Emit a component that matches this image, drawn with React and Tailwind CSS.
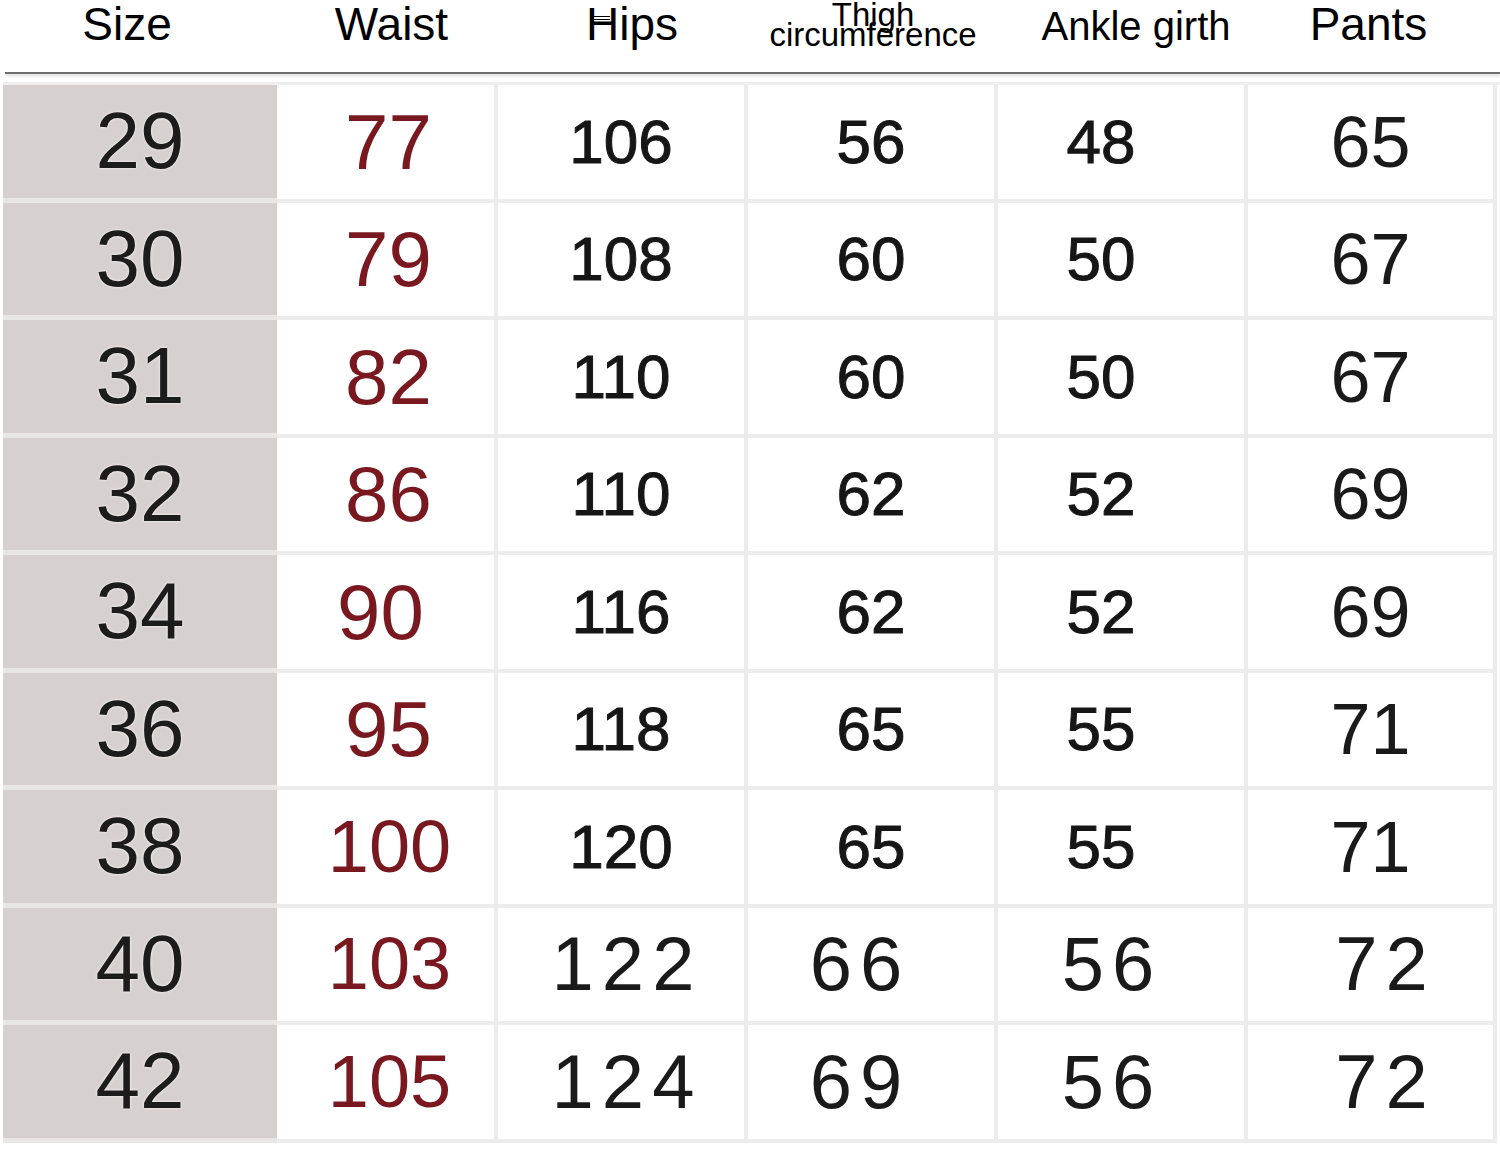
import React from 'react';

const rows = [
  ['29', '77', '106', '56', '48', '65'],
  ['30', '79', '108', '60', '50', '67'],
  ['31', '82', '110', '60', '50', '67'],
  ['32', '86', '110', '62', '52', '69'],
  ['34', '90', '116', '62', '52', '69'],
  ['36', '95', '118', '65', '55', '71'],
  ['38', '100', '120', '65', '55', '71'],
  ['40', '103', '122', '66', '56', '72'],
  ['42', '105', '124', '69', '56', '72'],
];

const cols = 'grid grid-cols-[274px_221px_250px_250px_250px_249px]';

// small measurement cells (rows 1-7, hips / thigh / ankle)
const small = 'text-[62px] text-[#161616] [-webkit-text-stroke:1px_#161616]';
// the last two rows are set larger and spaced out
const big = 'text-[76px] text-[#1a1a1a] tracking-[8px]';

function Cell({ children, className = '' }) {
  return (
    <div
      className={`flex items-center justify-center border-r-[4px] border-b-[4px] border-[#ececec] bg-white leading-none ${className}`}
    >
      {children}
    </div>
  );
}

export default function App() {
  return (
    <div className="w-[1500px] h-[1150px] bg-white font-['Liberation_Sans',Arial,sans-serif] text-black overflow-hidden">
      {/* header */}
      <div className={`${cols} ml-[3px] h-[72px]`}>
        <div className="flex justify-center pt-[1px] pr-[26px] text-[46px] leading-none">Size</div>
        <div className="flex justify-center pt-[1px] pl-[8px] text-[46px] leading-none">Waist</div>
        <div className="relative flex justify-center pt-[1px] pl-[18px] text-[46px] leading-none">
          <span className="relative">
            Hips
            <span className="absolute left-[6px] top-[15px] flex w-[18px] flex-col gap-[2px]">
              <span className="h-px bg-black" />
              <span className="h-px bg-black" />
              <span className="h-px bg-black" />
            </span>
          </span>
        </div>
        <div className="flex flex-col items-center pt-[5px] text-[33px] leading-[20px]">
          <span>Thigh</span>
          <span>circumference</span>
        </div>
        <div className="flex justify-center pt-[6px] pl-[26px] text-[40px] leading-none">Ankle girth</div>
        <div className="flex justify-center pt-[1px] pr-[8px] text-[46px] leading-none">Pants</div>
      </div>

      <div className="ml-[5px] h-[2px] bg-[#6e6e6e] shadow-[0_2px_3px_rgba(0,0,0,0.18)]" />

      {/* table */}
      <div className="mt-[8px] ml-[3px] border-t-[3px] border-[#eeeeee]">
        {rows.map((r, i) => {
          const last = i >= 7;
          return (
            <div key={r[0]} className={`${cols} h-[117.5px]`}>
              <div className="flex items-center justify-center border-b-[5px] border-[#e9e6e6] bg-[#d7d0d0] text-[80px] leading-none text-[#1c1c1c] [text-shadow:0_0_3px_#fff]">
                {r[0]}
              </div>
              <Cell className={`text-[#7a1820] ${r[1].length > 2 ? 'text-[74px] pl-[8px]' : 'text-[78px] pl-[6px]'} ${r[1] === '90' ? 'pr-[16px]' : ''}`}>
                {r[1]}
              </Cell>
              <Cell className={last ? `${big} pl-[12px]` : small}>{r[2]}</Cell>
              <Cell className={last ? `${big} pr-[22px]` : small}>{r[3]}</Cell>
              <Cell className={last ? `${big} pr-[18px]` : `${small} pr-[40px]`}>{r[4]}</Cell>
              <Cell className={last ? `${big} pl-[30px]` : 'text-[72px] text-[#1a1a1a]'}>{r[5]}</Cell>
            </div>
          );
        })}
      </div>
    </div>
  );
}
